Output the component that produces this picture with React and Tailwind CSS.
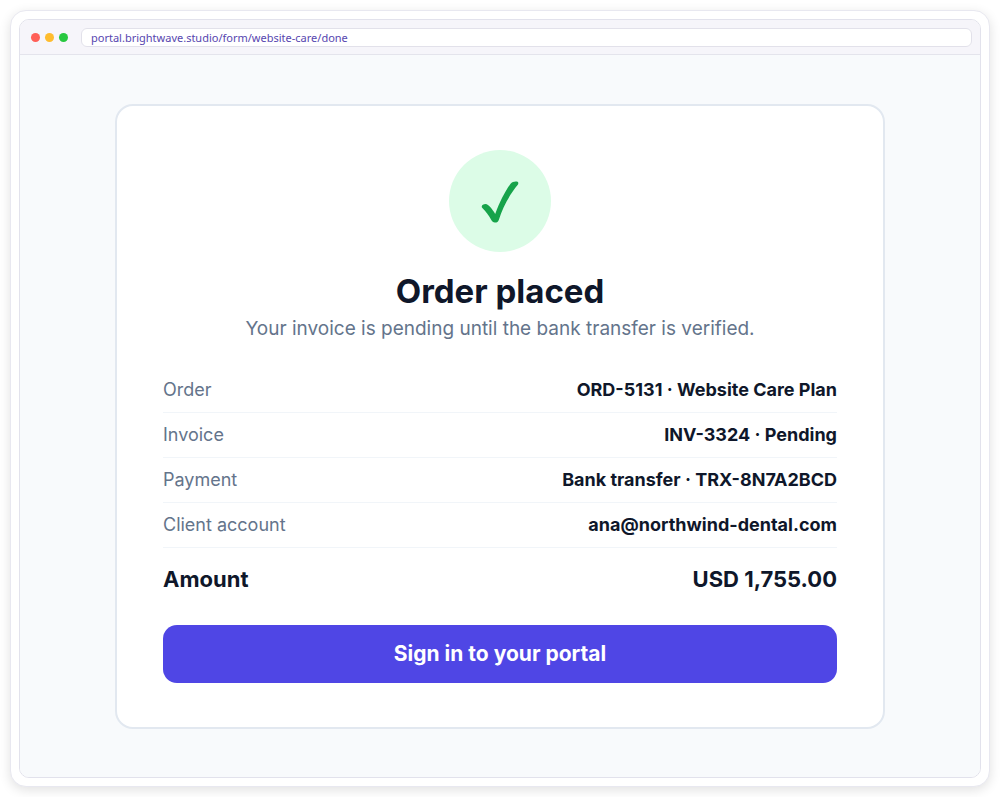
import React from 'react';

const details = [
  { label: 'Order', value: 'ORD-5131 · Website Care Plan' },
  { label: 'Invoice', value: 'INV-3324 · Pending' },
  { label: 'Payment', value: 'Bank transfer · TRX-8N7A2BCD' },
  { label: 'Client account', value: 'ana@northwind-dental.com' },
];

const BrowserBar = () => (
  <div className="flex items-center border-b border-[#e4e4ec] bg-[#f6f5fa] pt-2 pr-2 pb-[7px] pl-[11px]">
    <div className="flex gap-[5px]">
      <span className="h-[9px] w-[9px] rounded-full bg-[#ff5f57]"></span>
      <span className="h-[9px] w-[9px] rounded-full bg-[#febc2e]"></span>
      <span className="h-[9px] w-[9px] rounded-full bg-[#28c840]"></span>
    </div>
    <input
      type="text"
      aria-label="Address"
      readOnly
      defaultValue="portal.brightwave.studio/form/website-care/done"
      className="ml-[13px] h-[19px] min-w-0 flex-1 rounded-md border border-[#e2e1ea] bg-white px-[9px] font-['Noto_Sans',sans-serif] text-[11px] text-[#5746af] outline-none"
    />
  </div>
);

const CheckMark = () => (
  <div className="flex h-[102px] w-[102px] items-center justify-center rounded-full bg-[#dcfce7]">
    <svg width="40" height="44" viewBox="0 -1 40 44" fill="#16a34a" aria-hidden="true">
      <path d="M1.8 27.2C1.3 25.6 3.2 24.1 5.6 24.1C8.6 24.3 12.4 29.4 15.2 33.9C19.5 22.5 25.2 10.8 30.4 4C32.2 1.7 34.6 1.2 36.8 1.5C38.6 1.8 38.7 3.5 37.6 5.1C30.4 13.8 22.8 26.8 18.9 39.7C18.2 42 16.7 42.6 14.8 42.5C13.2 42.5 12.2 41.6 11.3 40C8.7 35.4 5.6 31.1 2.8 28.6Z" />
    </svg>
  </div>
);

const DetailRow = ({ label, value }) => (
  <div className="flex items-center justify-between border-b border-[#f1f5f9] py-2 text-lg">
    <dt className="text-[#64748b]">{label}</dt>
    <dd className="font-bold">{value}</dd>
  </div>
);

const OrderCard = () => (
  <main className="flex w-full max-w-[770px] flex-col items-center rounded-[18px] border-2 border-[#e2e8f0] bg-white px-[46px] py-11 text-[#0f172a]">
    <CheckMark />
    <h1 className="mt-5 text-[33px] leading-[38px] font-bold">Order placed</h1>
    <p className="mt-[5px] text-[19px] leading-7 text-[#64748b]">Your invoice is pending until the bank transfer is verified.</p>
    <dl className="mt-[25px] w-full">
      {details.map((row) => (
        <DetailRow key={row.label} label={row.label} value={row.value} />
      ))}
      <div className="flex items-center justify-between py-[15px] text-[22px] leading-8 font-bold">
        <dt>Amount</dt>
        <dd>USD 1,755.00</dd>
      </div>
    </dl>
    <button type="button" className="mt-[15px] w-full rounded-[14px] bg-[#4f46e5] py-[13px] text-[21px] leading-8 font-bold text-white">
      Sign in to your portal
    </button>
  </main>
);

export default function App() {
  return (
    <div className="flex min-h-screen bg-white p-[10px] font-['Inter',sans-serif]">
      <div className="flex flex-1 rounded-2xl border border-[#e8e8f0] bg-white p-2 shadow-[0_3px_12px_rgba(0,0,0,0.12)]">
        <div className="flex flex-1 flex-col overflow-hidden rounded-[10px] border border-[#e2e2ec]">
          <BrowserBar />
          <div className="flex flex-1 items-start justify-center bg-[#f8fafc] pt-[49px] pb-12">
            <OrderCard />
          </div>
        </div>
      </div>
    </div>
  );
}
